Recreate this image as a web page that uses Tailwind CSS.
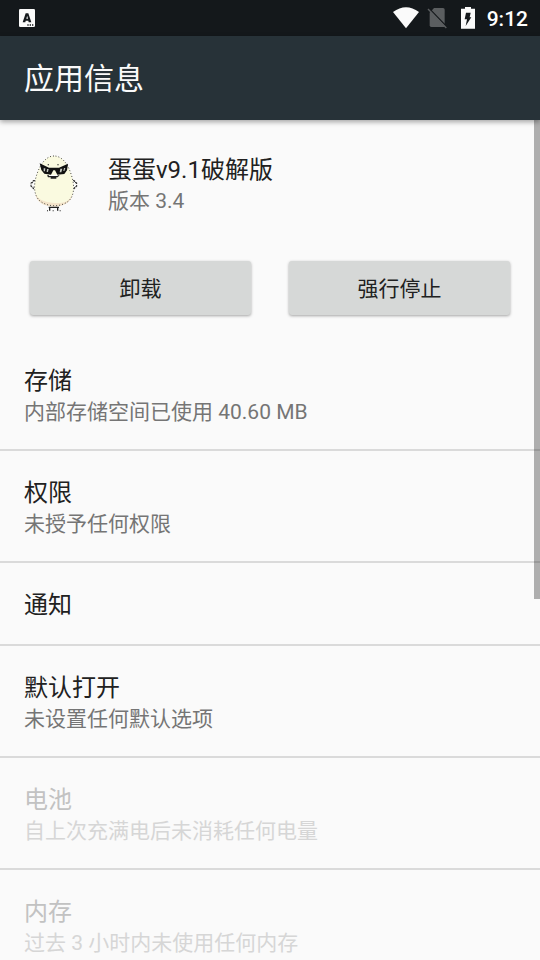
<!DOCTYPE html>
<html lang="zh-CN">
<head>
<meta charset="utf-8">
<meta name="viewport" content="width=device-width, initial-scale=1">
<title>应用信息</title>
<script src="https://cdn.jsdelivr.net/npm/@tailwindcss/browser@4"></script>
</head>
<body class="flex h-screen flex-col overflow-hidden bg-[#fafafa] font-['Roboto','Noto_Sans_CJK_SC',sans-serif] text-[#212121]">
  <div class="flex h-9 shrink-0 items-center justify-between bg-[#14181b] pr-3 pl-[19px] text-white">
    <svg class="h-[18px] w-4" viewBox="0 0 48 54" aria-hidden="true">
      <rect width="48" height="54" rx="4" fill="#fafafa"/>
      <path d="M11 40 20 13h8l9 27h-8l-1-5h-8l-1 5zM22 29h5l-2.500-9z" fill="#14181b" fill-rule="evenodd"/>
      <path d="M25 46h4v4h-4zM32 46h4v4h-4zM39 46h4v4h-4z" fill="#14181b"/>
    </svg>
    <div class="flex items-center">
      <svg class="h-[22px] w-[26px]" viewBox="37 20 78 66" aria-hidden="true">
        <path d="M37 35Q76 7 115 35L76 84z" fill="#fafafa"/>
      </svg>
      <svg class="ml-2 h-[22px] w-5" viewBox="142 21 60 66" aria-hidden="true">
        <path d="M163 24h27q5 0 5 5v52h-40q-5 0-5-5V38z" fill="#5b5e60"/>
        <path d="M147 24 204 83" stroke="#14181b" stroke-width="4"/>
        <path d="M145 27 200 84" stroke="#5b5e60" stroke-width="4"/>
      </svg>
      <svg class="ml-3.5 h-[22px] w-[14px]" viewBox="243 19 42 66" aria-hidden="true">
        <path d="M243 24h12v-6h18v6h12v60h-42z" fill="#fafafa"/>
        <path d="M258 36h14l-3 14h5L257 76l4-20h-7z" fill="#14181b"/>
      </svg>
      <span class="ml-3 pt-px text-[21px] leading-6 font-medium">9:12</span>
    </div>
  </div>
  <header class="relative z-10 flex h-21 shrink-0 items-center bg-[#273238] px-6 pt-0.5 shadow-[0_2px_5px_rgba(0,0,0,0.35)]">
    <h1 class="text-[30px] leading-10 text-[#fafafa]">应用信息</h1>
  </header>
  <div class="relative min-h-0 flex-1">
    <main class="h-full overflow-y-auto [scrollbar-width:none]">
      <section class="flex items-center gap-6 px-6 pt-[33px]">
        <svg class="size-15 shrink-0" viewBox="13 28 180 180" role="img" aria-label="蛋蛋">
          <path d="M46 105h-6v6h-6v12h6v6h8M160 105h5v6h6v12h-6v6h-6" fill="none" stroke="#222" stroke-width="3" stroke-dasharray="9 3"/>
          <path d="M103 31C76 31 59 62 50 91c-9 30-7 57 9 73 22 21 67 22 90 0 15-16 16-44 7-73-9-31-26-60-53-60z" fill="#fafae0"/>
          <path d="M47 143q8 26 57 29t54-31c1 26-24 42-55 42-32 0-55-16-56-40z" fill="#f4e4cb"/>
          <path d="M103 31C76 31 59 62 50 91c-9 30-7 57 9 73 22 21 67 22 90 0 15-16 16-44 7-73-9-31-26-60-53-60z" fill="none" stroke="#4b4a43" stroke-width="3" stroke-dasharray="3 6"/>
          <path d="M60 53 88 66h30l27-12-3 20-8 11-21 2-7-13h-5l-7 13-20-3-9-11z" fill="#111"/>
          <path d="M72 68h5l-1 9h-4zM82 70h5l-2 9h-4zM122 69h6l-3 11h-5zM133 67h4l-3 9h-3z" fill="#c5c9c2"/>
          <path d="M84 56h4v3h-4zM113 56h4v3h-4zM82 89h38l-6 6h-4v4H93v-4h-8z" fill="#222"/>
          <path d="M88 88h26v3H88z" fill="#fff"/>
          <path d="M87 183h31v4H87zM88 187h4v8h-4zM112 187h4v8h-4zM82 194h3v3h-3zM99 194h3v3h-3zM120 194h3v3h-3z" fill="#222"/>
        </svg>
        <div>
          <h2 class="text-[24px] leading-[34px]">蛋蛋v9.1破解版</h2>
          <p class="text-[21px] leading-[29px] text-[#757575]">版本 3.4</p>
        </div>
      </section>
      <div class="grid grid-cols-2 gap-[38px] px-[30px] pt-[45px] pb-6">
        <button type="button" class="h-[54px] rounded-[3px] bg-[#d6d8d7] pt-0.5 text-[21px] leading-[29px] shadow-[0_1px_3px_rgba(0,0,0,0.35)]">卸载</button>
        <button type="button" class="h-[54px] rounded-[3px] bg-[#d6d8d7] pt-0.5 text-[21px] leading-[29px] shadow-[0_1px_3px_rgba(0,0,0,0.35)]">强行停止</button>
      </div>
      <ul>
        <li><button type="button" class="block w-full border-b-2 border-[#dadada] px-6 pt-[25px] pb-[22px] text-left">
          <span class="block text-[24px] leading-[34px]">存储</span>
          <span class="block text-[21px] leading-[29px] text-[#757575]">内部存储空间已使用 40.60 MB</span>
        </button></li>
        <li><button type="button" class="block w-full border-b-2 border-[#dadada] px-6 pt-[25px] pb-[22px] text-left">
          <span class="block text-[24px] leading-[34px]">权限</span>
          <span class="block text-[21px] leading-[29px] text-[#757575]">未授予任何权限</span>
        </button></li>
        <li><button type="button" class="block w-full border-b-2 border-[#dadada] px-6 pt-[25px] pb-[22px] text-left">
          <span class="block text-[24px] leading-[34px]">通知</span>
        </button></li>
        <li><button type="button" class="block w-full border-b-2 border-[#dadada] px-6 pt-[25px] pb-[22px] text-left">
          <span class="block text-[24px] leading-[34px]">默认打开</span>
          <span class="block text-[21px] leading-[29px] text-[#757575]">未设置任何默认选项</span>
        </button></li>
        <li><button type="button" disabled class="block w-full border-b-2 border-[#dadada] px-6 pt-[25px] pb-[22px] text-left">
          <span class="block text-[24px] leading-[34px] text-[#c2c2c2]">电池</span>
          <span class="block text-[21px] leading-[29px] text-[#d6d6d6]">自上次充满电后未消耗任何电量</span>
        </button></li>
        <li><button type="button" disabled class="block w-full border-b-2 border-[#dadada] px-6 pt-[25px] pb-[22px] text-left">
          <span class="block text-[24px] leading-[34px] text-[#c2c2c2]">内存</span>
          <span class="block text-[21px] leading-[29px] text-[#d6d6d6]">过去 3 小时内未使用任何内存</span>
        </button></li>
      </ul>
    </main>
    <div class="pointer-events-none absolute top-0 right-0 h-[57%] w-1.5 bg-black/30" aria-hidden="true"></div>
  </div>
</body>
</html>
